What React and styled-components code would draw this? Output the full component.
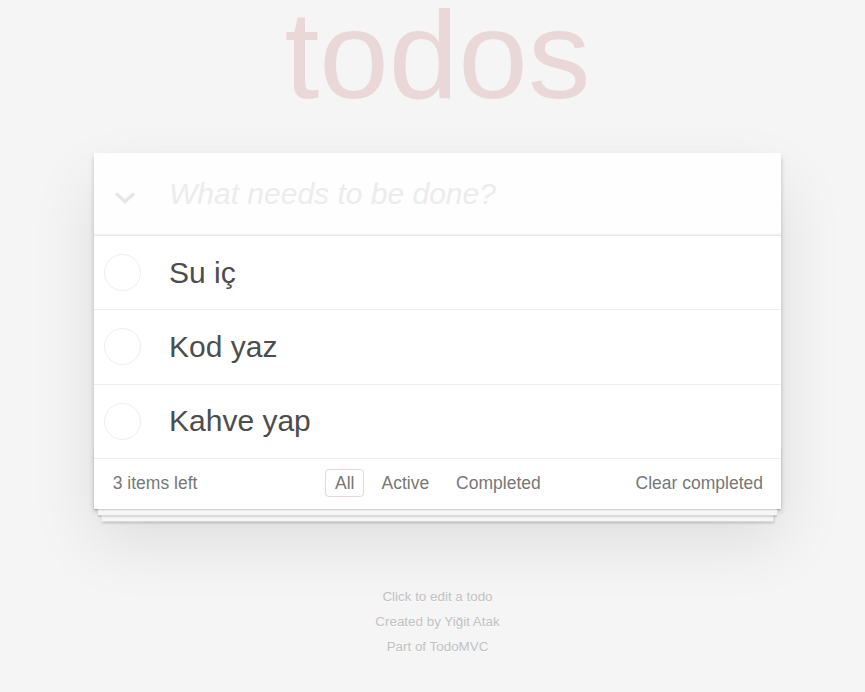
import React, { useState } from "react";
import styled, { createGlobalStyle } from "styled-components";

const GlobalStyle = createGlobalStyle`
  html, body {
    margin: 0;
    padding: 0;
  }
  body {
    background: #f5f5f5;
    color: #4d4d4d;
    font: 17.5px "Liberation Sans", Arial, Helvetica, sans-serif;
    line-height: 1.4em;
    padding-left: 10px;
  }
`;

const Page = styled.section`
  width: 687px;
  margin: 0 auto;
`;

const Title = styled.h1`
  margin: 0;
  height: 110px;
  line-height: 110px;
  font-size: 125px;
  font-weight: 100;
  text-align: center;
  color: rgba(175, 47, 47, 0.15);
  text-rendering: optimizeLegibility;
`;

const TodoApp = styled.div`
  margin-top: 43px;
  background: #fff;
  position: relative;
  box-shadow: 0 2.5px 5px 0 rgba(0, 0, 0, 0.2),
    0 31px 62px 0 rgba(0, 0, 0, 0.1);
`;

const Header = styled.header`
  display: flex;
  align-items: center;
  height: 82px;
  background: rgba(0, 0, 0, 0.003);
  box-shadow: inset 0 -2px 1px rgba(0, 0, 0, 0.03);
`;

const ToggleAll = styled.span`
  width: 75px;
  display: flex;
  justify-content: center;
  padding: 8px 14px 0 0;
  box-sizing: border-box;
`;

const NewTodo = styled.input`
  flex: 1;
  border: 0;
  outline: none;
  background: transparent;
  font-family: inherit;
  font-size: 30px;
  line-height: 42px;
  color: inherit;
  padding: 0 20px 0 0;

  &::placeholder {
    font-style: italic;
    color: #ececec;
  }
`;

const List = styled.ul`
  margin: 0;
  padding: 0;
  list-style: none;
  border-top: 1px solid #e6e6e6;
`;

const Item = styled.li`
  display: flex;
  align-items: center;
  border-bottom: 1px solid #ededed;
  font-size: 30px;
`;

const Check = styled.span`
  width: 37px;
  height: 37px;
  box-sizing: border-box;
  border: 1.2px solid #ededed;
  border-radius: 50%;
  margin: 0 28px 0 10px;
  flex: none;
`;

const Label = styled.label`
  padding: 18.75px 18.75px 18.5px 0;
  line-height: 36px;
  word-break: break-all;
`;

const Footer = styled.footer`
  position: relative;
  display: grid;
  grid-template-columns: 1fr auto 1fr;
  align-items: center;
  color: #777;
  padding: 12.5px 18px 12.5px 18.75px;
  height: 25px;
  line-height: 25px;

  &::before {
    content: "";
    position: absolute;
    right: 0;
    bottom: 0;
    left: 0;
    height: 62px;
    overflow: hidden;
    pointer-events: none;
    box-shadow: 0 1.25px 1.25px rgba(0, 0, 0, 0.2),
      0 10px 0 -3.75px #f6f6f6,
      0 11.25px 1.25px -3.75px rgba(0, 0, 0, 0.2),
      0 20px 0 -7.5px #f6f6f6,
      0 21.25px 2.5px -7.5px rgba(0, 0, 0, 0.2);
  }
`;

const Count = styled.span`
  text-align: left;
`;

const Filters = styled.ul`
  margin: 0;
  padding: 0;
  list-style: none;
  display: flex;
`;

const FilterLink = styled.a`
  color: inherit;
  margin: 0 3.75px;
  padding: 3px 8.75px;
  line-height: 25px;
  text-decoration: none;
  border: 1px solid ${(p) => (p.$selected ? "rgba(175, 47, 47, 0.2)" : "transparent")};
  border-radius: 3.75px;
  cursor: pointer;
`;

const Clear = styled.button`
  justify-self: end;
  border: 0;
  background: none;
  padding: 0;
  font: inherit;
  color: inherit;
  line-height: 25px;
  cursor: pointer;
`;

const Info = styled.footer`
  margin-top: 81px;
  color: #c2c2c2;
  font-size: 13.4px;
  text-shadow: 0 1px 0 rgba(255, 255, 255, 0.5);
  text-align: center;

  p {
    margin: 0 0 11.6px;
    line-height: 1;
  }
  a {
    color: inherit;
    text-decoration: none;
  }
`;

const Chevron = () => (
  <svg width="22" height="12" viewBox="0 0 22 12">
    <polyline
      points="2,1.5 11,9.5 20,1.5"
      fill="none"
      stroke="#e6e6e6"
      strokeWidth="3.2"
    />
  </svg>
);

const todos = ["Su iç", "Kod yaz", "Kahve yap"];

export default function App() {
  const [filter, setFilter] = useState("All");

  return (
    <>
      <GlobalStyle />
      <Page>
        <Title>todos</Title>
        <TodoApp>
          <Header>
            <ToggleAll>
              <Chevron />
            </ToggleAll>
            <NewTodo placeholder="What needs to be done?" />
          </Header>
          <List>
            {todos.map((t) => (
              <Item key={t}>
                <Check />
                <Label>{t}</Label>
              </Item>
            ))}
          </List>
          <Footer>
            <Count>3 items left</Count>
            <Filters>
              {["All", "Active", "Completed"].map((f) => (
                <li key={f}>
                  <FilterLink $selected={filter === f} onClick={() => setFilter(f)}>
                    {f}
                  </FilterLink>
                </li>
              ))}
            </Filters>
            <Clear>Clear completed</Clear>
          </Footer>
        </TodoApp>
        <Info>
          <p>Click to edit a todo</p>
          <p>
            Created by <a>Yiğit Atak</a>
          </p>
          <p>
            Part of <a>TodoMVC</a>
          </p>
        </Info>
      </Page>
    </>
  );
}
